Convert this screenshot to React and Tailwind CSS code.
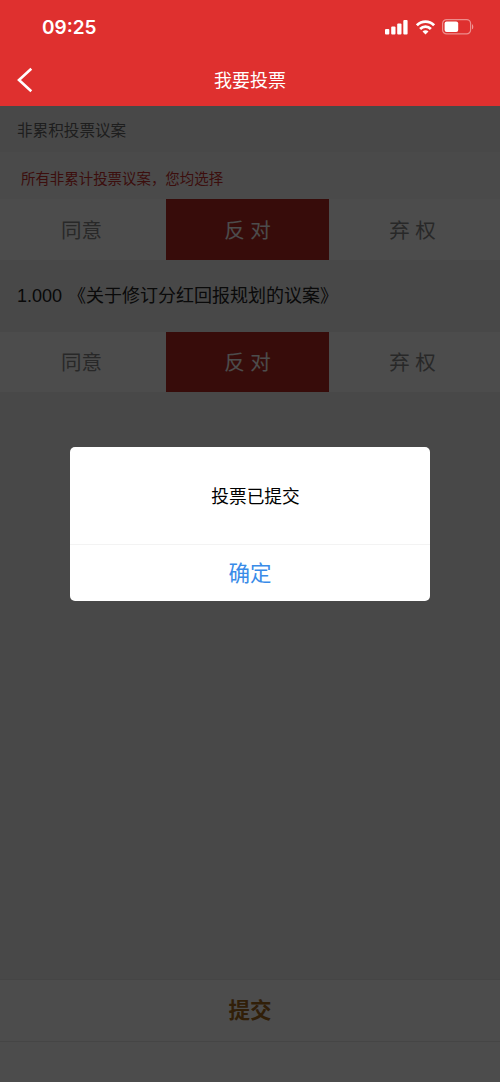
import { useState } from 'react';

const options = ['同意', '反 对', '弃 权'];

function StatusBar() {
    return (
        <div className="h-[54px] pl-[42px] pr-[26px] flex items-center justify-between">
            <span className="font-['Inter'] font-semibold text-[19px] leading-none">09:25</span>
            <div className="flex items-center gap-[7.5px]">
                {/* Signal */}
                <svg width="23" height="15" viewBox="0 0 23 15" fill="currentColor">
                    <rect x="0" y="9" width="4.3" height="5.5" rx="1" />
                    <rect x="6.2" y="6.5" width="4.3" height="8" rx="1" />
                    <rect x="12.2" y="3.5" width="4.3" height="11" rx="1" />
                    <rect x="18.3" y="0" width="4.3" height="14.5" rx="1" />
                </svg>
                {/* Wifi */}
                <svg width="19" height="15" viewBox="0 0 19 15" fill="none" stroke="currentColor" strokeWidth="2.8">
                    <path d="M0.9 5.3C5.8 0.3 13.2 0.3 18.1 5.3" />
                    <path d="M4.1 8.9C7.2 5.8 11.8 5.8 14.9 8.9" />
                    <path d="M9.5 14.4L6.5 11.4C8.2 9.8 10.8 9.8 12.5 11.4Z" fill="currentColor" stroke="none" />
                </svg>
                {/* Battery */}
                <svg width="32" height="16" viewBox="0 0 32 16" fill="none">
                    <rect x="0.6" y="0.6" width="28" height="14.3" rx="4" stroke="white" strokeOpacity="0.45" strokeWidth="1.2" />
                    <rect x="2.6" y="2.6" width="13.6" height="10.3" rx="2" fill="white" />
                    <path d="M30 5.2C31.7 5.8 31.7 9.7 30 10.3Z" fill="white" fillOpacity="0.5" />
                </svg>
            </div>
        </div>
    );
}

function NavBar() {
    return (
        <div className="h-[52px] px-[17px] grid grid-cols-[1fr_auto_1fr] items-center">
            <svg width="16" height="26" viewBox="0 0 16 26" fill="none" stroke="currentColor" strokeWidth="2.6">
                <path d="M14.3 1.8L2 13L14.3 24.2" />
            </svg>
            <h1 className="pt-0.5 text-lg leading-none">我要投票</h1>
        </div>
    );
}

function VoteOptions({ value, onChange }) {
    return (
        <div className="grid grid-cols-[163px_163px_1fr] gap-x-[3px] pr-[7px] bg-white">
            {options.map((option, i) => (
                <button
                    key={option}
                    onClick={() => onChange(i)}
                    className={
                        value === i
                            ? 'h-[60.5px] pt-1 text-[20.5px] bg-[#b82a22] text-white'
                            : 'h-[60.5px] pt-1 text-[20.5px] bg-white text-[#888]'
                    }
                >
                    {option}
                </button>
            ))}
        </div>
    );
}

export default function App() {
    const [allVote, setAllVote] = useState(1);
    const [vote, setVote] = useState(1);
    const [open, setOpen] = useState(true);

    return (
        <div className="h-[1082px] flex flex-col bg-white font-['Liberation_Sans','Noto_Sans_CJK_SC',sans-serif]">
            <header className="bg-[#df302f] text-white">
                <StatusBar />
                <NavBar />
            </header>

            <main className="flex-1 flex flex-col bg-[#f2f2f2]">
                <h2 className="h-[46px] pl-[17px] pt-1 flex items-center text-[15.6px] text-[#666]">非累积投票议案</h2>
                <p className="h-[47px] pl-[21px] pt-[9px] flex items-center bg-[#f8f8f8] text-[14.45px] text-[#c8302c]">
                    所有非累计投票议案，您均选择
                </p>
                <VoteOptions value={allVote} onChange={setAllVote} />
                <p className="h-[72px] pl-[17px] pt-px flex items-center text-lg text-[#222]">
                    <span className="w-[51px]">1.000</span>
                    《关于修订分红回报规划的议案》
                </p>
                <VoteOptions value={vote} onChange={setVote} />
            </main>

            <footer className="h-[103px] bg-white border-t border-[#e6e6e6]">
                <button className="w-full h-[62px] pt-0.5 border-b border-[#e6e6e6] text-[21.5px] font-bold text-[#a5681c]">提交</button>
            </footer>

            {/* Dialog */}
            {open && (
                <div className="absolute inset-x-0 top-[106px] h-[976px] bg-black/70">
                    <div className="w-[360px] h-[154px] mx-auto mt-[341px] rounded-[5px] bg-white overflow-hidden">
                        <p className="h-[97px] pl-[11px] pt-[3px] flex items-center justify-center text-[17.7px] text-black">投票已提交</p>
                        <button
                            onClick={() => setOpen(false)}
                            className="w-full h-[57px] pt-[3px] border-t border-[#f3f3f3] text-[21.5px] text-[#398be8]"
                        >
                            确定
                        </button>
                    </div>
                </div>
            )}
        </div>
    );
}
